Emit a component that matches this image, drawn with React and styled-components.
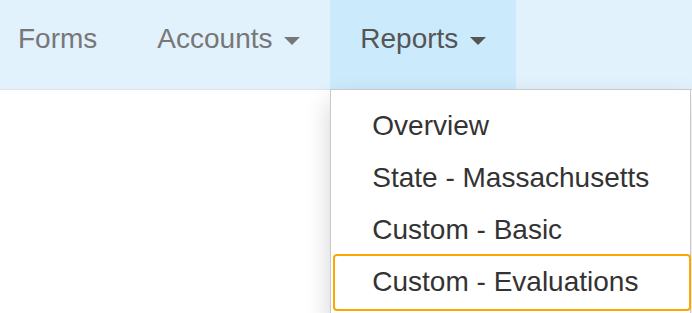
import React from "react";
import styled, { createGlobalStyle } from "styled-components";

const Global = createGlobalStyle`
  html, body { margin: 0; padding: 0; background: #fff; }
  body { font-family: "Liberation Sans", Arial, sans-serif; }
  * { box-sizing: border-box; }
`;

const Page = styled.div`
  position: relative;
  width: 692px;
  height: 313px;
  overflow: hidden;
  background: #fff;
`;

const Navbar = styled.nav`
  height: 90px;
  background: #e1f2fd;
  border-bottom: 1px solid #e2e2e2;
`;

const NavList = styled.ul`
  display: flex;
  margin: 0 0 0 -12px;
  padding: 0;
  list-style: none;
  height: 89px;
`;

const NavItem = styled.li`
  position: relative;
  height: 89px;
  background: ${(p) => (p.$open ? "#cbeafc" : "transparent")};
`;

const NavLink = styled.a`
  display: block;
  padding: 19px 30px 30px;
  font-size: 28px;
  line-height: 40px;
  color: ${(p) => (p.$open ? "#555" : "#777")};
  text-decoration: none;
  white-space: nowrap;
`;

const Caret = styled.span`
  display: inline-block;
  width: 0;
  height: 0;
  margin-left: 4px;
  vertical-align: middle;
  border-top: 8px solid currentColor;
  border-left: 8px solid transparent;
  border-right: 8px solid transparent;
`;

const Menu = styled.div`
  position: absolute;
  top: 89px;
  left: 0;
  width: 361px;
  padding: 10px 0;
  background: #fff;
  border: 1px solid #c9c9c9;
  box-shadow: 0 12px 24px rgba(0, 0, 0, 0.175);
  z-index: 10;
`;

const MenuItem = styled.div`
  position: relative;
  padding: 6px 40px 6px 41px;
  font-size: 28px;
  line-height: 40px;
  color: #333;
  white-space: nowrap;
`;

const FocusRing = styled.span`
  position: absolute;
  top: -2px;
  bottom: -3px;
  left: 2px;
  right: -1px;
  border: 2px solid #ffa500;
  border-radius: 4px;
  pointer-events: none;
`;

const items = ["Overview", "State - Massachusetts", "Custom - Basic", "Custom - Evaluations"];

export default function App() {
  return (
    <Page>
      <Global />
      <Navbar>
        <NavList>
          <NavItem>
            <NavLink>Forms</NavLink>
          </NavItem>
          <NavItem>
            <NavLink>
              Accounts <Caret />
            </NavLink>
          </NavItem>
          <NavItem $open>
            <NavLink $open>
              Reports <Caret />
            </NavLink>
            <Menu>
              {items.map((t, i) => (
                <MenuItem key={t}>
                  {t}
                  {i === items.length - 1 && <FocusRing />}
                </MenuItem>
              ))}
            </Menu>
          </NavItem>
        </NavList>
      </Navbar>
    </Page>
  );
}
